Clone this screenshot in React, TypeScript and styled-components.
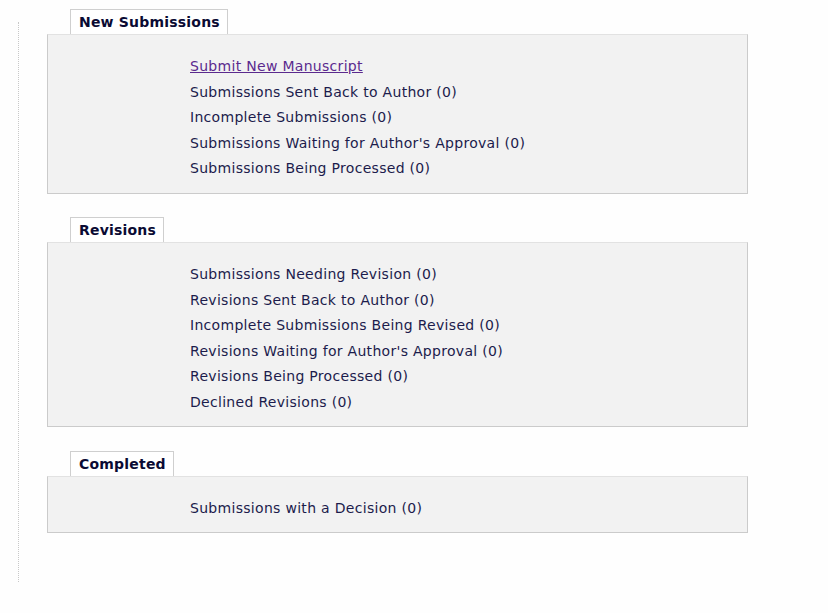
import React from "react";
import styled, { createGlobalStyle } from "styled-components";

const GlobalStyle = createGlobalStyle`
  body {
    margin: 0;
    background: #fefefe;
    font-family: "DejaVu Sans", Verdana, sans-serif;
  }
`;

interface Section {
  title: string;
  items: { label: string; link?: boolean }[];
}

const sections: Section[] = [
  {
    title: "New Submissions",
    items: [
      { label: "Submit New Manuscript", link: true },
      { label: "Submissions Sent Back to Author (0)" },
      { label: "Incomplete Submissions (0)" },
      { label: "Submissions Waiting for Author's Approval (0)" },
      { label: "Submissions Being Processed (0)" },
    ],
  },
  {
    title: "Revisions",
    items: [
      { label: "Submissions Needing Revision (0)" },
      { label: "Revisions Sent Back to Author (0)" },
      { label: "Incomplete Submissions Being Revised (0)" },
      { label: "Revisions Waiting for Author's Approval (0)" },
      { label: "Revisions Being Processed (0)" },
      { label: "Declined Revisions (0)" },
    ],
  },
  {
    title: "Completed",
    items: [{ label: "Submissions with a Decision (0)" }],
  },
];

const App: React.FC = () => {
  return (
    <Page>
      <GlobalStyle />
      <Rail />
      <Content>
        {sections.map((s) => (
          <Block key={s.title}>
            <Tab>{s.title}</Tab>
            <Panel>
              {s.items.map((it) =>
                it.link ? (
                  <LinkItem key={it.label} href="#">
                    {it.label}
                  </LinkItem>
                ) : (
                  <Item key={it.label}>{it.label}</Item>
                )
              )}
            </Panel>
          </Block>
        ))}
      </Content>
    </Page>
  );
};

const Page = styled.div`
  display: flex;
  align-items: flex-start;
  min-height: 613px;
`;

const Rail = styled.div`
  width: 18px;
  height: 560px;
  margin-top: 22px;
  border-right: 1px dotted #c8c8c8;
  flex-shrink: 0;
`;

const Content = styled.div`
  padding: 9px 0 0 28px;
  width: 701px;
  display: flex;
  flex-direction: column;
  gap: 23.5px;
`;

const Block = styled.div`
  display: flex;
  flex-direction: column;
`;

const Tab = styled.div`
  align-self: flex-start;
  margin-left: 23px;
  height: 24px;
  line-height: 25px;
  padding: 0 7px 0 8px;
  background: #fff;
  border: 1px solid #cfcfcf;
  border-bottom: none;
  color: #0a0a33;
  font-weight: bold;
  font-size: 14px;
  letter-spacing: 0.2px;
`;

const Panel = styled.div`
  background: #f2f2f2;
  border: 1px solid #cbcbcb;
  border-top-color: #e2e2e2;
  padding: 19px 0 11px 142px;
  display: flex;
  flex-direction: column;
`;

const Item = styled.div`
  font-size: 14px;
  letter-spacing: 0.3px;
  line-height: 25.5px;
  color: #1c1c4c;
`;

const LinkItem = styled.a`
  font-size: 14px;
  letter-spacing: 0.3px;
  line-height: 25.5px;
  color: #5b2a8e;
  text-decoration: underline;
  align-self: flex-start;
`;

export default App;
